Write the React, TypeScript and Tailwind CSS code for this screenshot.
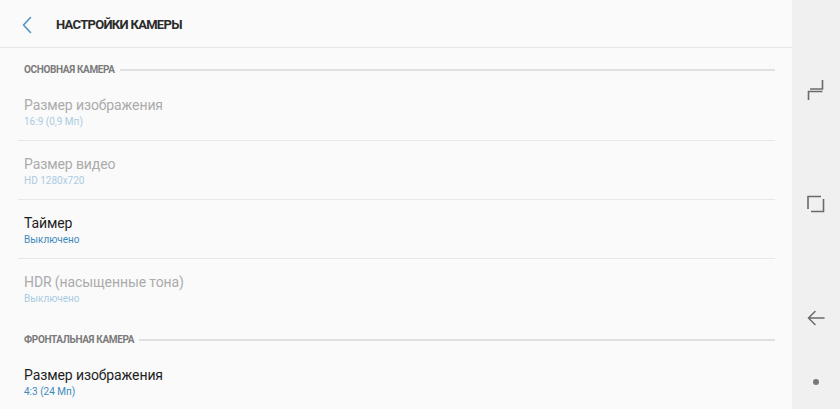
import React from "react"

type Item = { title: string; value: string; disabled?: boolean; last?: boolean }

const mainCamera: Item[] = [
  { title: "Размер изображения", value: "16:9 (0,9 Мп)", disabled: true },
  { title: "Размер видео", value: "HD 1280x720", disabled: true },
  { title: "Таймер", value: "Выключено" },
  { title: "HDR (насыщенные тона)", value: "Выключено", disabled: true, last: true },
]

const frontCamera: Item[] = [{ title: "Размер изображения", value: "4:3 (24 Мп)", last: true }]

function SectionHeader({ label }: { label: string }) {
  return (
    <div className="flex items-center pl-[24px] pr-[17px] pt-[16px] pb-[6px]">
      <span className="text-[10px] leading-[12px] font-bold text-[#7b7b7b] tracking-[-0.35px] whitespace-nowrap">
        {label}
      </span>
      <div className="flex-1 h-[2px] bg-[#e0e0e0] ml-[5px]" />
    </div>
  )
}

function Row({ item }: { item: Item }) {
  return (
    <div className={"ml-[18px] mr-[17px] pl-[6px] pt-[13px] pb-[11px] " + (item.last ? "border-b border-transparent" : "border-b border-[#e8e8e8]")}>
      <div className={"text-[14px] leading-[20px] tracking-[-0.1px] " + (item.disabled ? "text-[#ababab]" : "text-[#1e1e1e]")}>
        {item.title}
      </div>
      <div className={"text-[10px] leading-[14px] " + (item.disabled ? "text-[#a9cce2]" : "text-[#3d8bbb]")}>
        {item.value}
      </div>
    </div>
  )
}

export default function App() {
  return (
    <div className="w-[840px] h-[409px] flex overflow-hidden bg-[#fafafa]" style={{ fontFamily: "Roboto, 'Noto Sans', sans-serif" }}>
      <div className="w-[792px] flex flex-col">
        <div className="h-[48px] flex items-center border-b border-[#e6e6e6] shrink-0 pt-[2px]">
          <div className="w-[56px] flex justify-center pr-[2px]">
            <svg width="12" height="18" viewBox="0 0 12 18" fill="none">
              <path d="M9.5 1.5 L2.5 9 L9.5 16.5" stroke="#4f93c3" strokeWidth="1.6" strokeLinecap="round" strokeLinejoin="round" />
            </svg>
          </div>
          <span className="text-[13px] font-bold text-[#2b2b2b] tracking-[-0.7px]">НАСТРОЙКИ КАМЕРЫ</span>
        </div>
        <SectionHeader label="ОСНОВНАЯ КАМЕРА" />
        {mainCamera.map((it, i) => (
          <Row key={i} item={it} />
        ))}
        <SectionHeader label="ФРОНТАЛЬНАЯ КАМЕРА" />
        {frontCamera.map((it, i) => (
          <Row key={i} item={it} />
        ))}
      </div>
      <div className="w-[48px] bg-[#f0f0f0] flex flex-col items-center pt-[33px]">
        <div className="h-[114px] flex items-center justify-center">
          <svg width="18" height="22" viewBox="0 0 18 22" fill="none" stroke="#6a6a6a" strokeWidth="1.6">
            <path d="M15.5 1 V10 H3" />
            <path d="M1 12.5 H15.5 M1.5 12 V21" />
          </svg>
        </div>
        <div className="h-[114px] flex items-center justify-center">
          <svg width="18" height="18" viewBox="0 0 18 18" fill="none" stroke="#6a6a6a" strokeWidth="1.6">
            <path d="M1 14 V1.5 H14 M16.5 4 V16.5 H4" />
          </svg>
        </div>
        <div className="h-[114px] flex items-center justify-center">
          <svg width="18" height="18" viewBox="0 0 18 18" fill="none" stroke="#6a6a6a" strokeWidth="1.5" strokeLinecap="round">
            <path d="M17 9 H1.5 M8 2.5 L1.5 9 L8 15.5" />
          </svg>
        </div>
        <div className="mt-[4px] w-[6px] h-[6px] rounded-full bg-[#777]" />
      </div>
    </div>
  )
}
